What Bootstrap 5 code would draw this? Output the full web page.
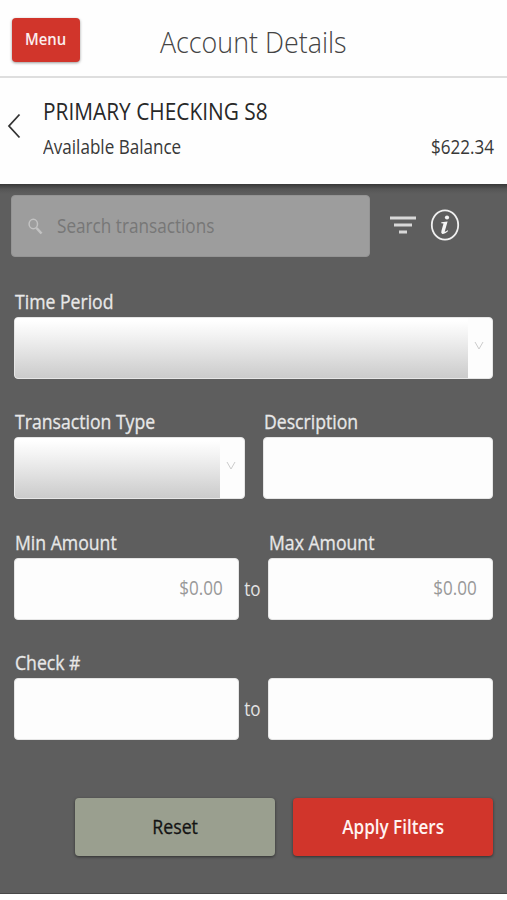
<!DOCTYPE html>
<html lang="en">
<head>
<meta charset="utf-8">
<meta name="viewport" content="width=device-width, initial-scale=1">
<title>Account Details</title>
<link href="https://cdn.jsdelivr.net/npm/bootstrap@5.3.0/dist/css/bootstrap.min.css" rel="stylesheet">
<style>
body{font-family:"Open Sans","Noto Sans",sans-serif;font-size:19.5px;line-height:24px;color:#383838;background:#fefefe;height:900px;overflow:hidden}
.narrow{display:inline-block;white-space:nowrap;transform:scaleX(.875);transform-origin:left center}
.from-right{transform-origin:right center}
.from-mid{transform-origin:center}
.topbar{height:78px;border-bottom:2px solid #dedede;padding:18px 12px 0}
.menu-btn{width:68px;height:44px;padding:0 0 2px;border:0;border-radius:4px;background:#d1352b;color:#fbeeee;font-size:17px;font-weight:600;line-height:40px;box-shadow:0 1px 3px rgba(0,0,0,.4)}
.menu-btn:hover,.act:hover{background:#b92d25;color:#fff}
.page-title{font-size:30px;font-weight:300;line-height:40px;color:#444;margin:4px 68px 0 0}
.page-title .narrow{transform:scaleX(.895)}
.account{height:106px;padding:17px 13px 0 7px}
.back{width:15px;height:26px;margin:18px 21px 0 0}
.acct-name{font-size:23.4px;line-height:32px;color:#282828;margin:0}
.acct-name .narrow{transform:scaleX(.892)}
.bal{margin-top:8px}
.filters{height:710px;background:#5e5e5e linear-gradient(#383838,#555 5px,#5e5e5e 10px) no-repeat 0 0/100% 10px;padding:11px 14px 0;border-bottom:1px solid #484848}
.search{width:359px;height:62px;margin-left:-3px;padding-left:16px;border-radius:4px;background:#9d9d9d;border:1px solid #949494;color:#777}
.search .narrow{margin-left:13.5px;transform:scaleX(.88)}
.funnel{margin:0 0 2px 20px}
.info-i{margin:0 0 3px 14px}
.fields{padding-top:33px}
.group{margin-bottom:31.4px}
.lbl{display:block;color:#e8e8e8;-webkit-text-stroke:.3px;padding-left:1px;margin-bottom:3px}
.lbl .narrow{transform:scaleX(.904)}
.box{height:62px;padding:0 15px 2px;border:1px solid #e6e6e6;border-radius:4px;background:#fdfdfd;color:#999}
.picker{padding:0;overflow:hidden}
.shade{background:linear-gradient(#fff 5%,#f2f2f2 30%,#cbcbcb)}
.drop{width:24px;padding:0 2px 4px 0}
.to-word{width:29px;height:62px;padding-right:2px;color:#e4e4e4}
.half{width:230.5px}
.ranged{width:225px}
.act{width:200px;height:58px;padding:0 0 1px;border:0;border-radius:4px;font-size:19.5px;font-weight:600;box-shadow:0 1px 3px rgba(0,0,0,.5)}
.reset{background:#9a9f8f;color:#141414;font-weight:400;-webkit-text-stroke:.3px}
.reset .narrow{transform:scaleX(.91)}
.apply{background:#d1352b;color:#fff3f2}
.actions{margin-top:58px;gap:18px}
</style>
</head>
<body>
<header class="topbar d-flex align-items-start">
  <button class="btn menu-btn"><span class="narrow from-mid">Menu</span></button>
  <h1 class="page-title flex-grow-1 text-center"><span class="narrow from-mid">Account Details</span></h1>
</header>
<section class="account d-flex align-items-start">
  <svg class="back flex-shrink-0" viewBox="0 0 15 26" fill="none" stroke="#333" stroke-width="1.8"><path d="M12.500 1.500 2 13l10.500 11.500"/></svg>
  <div class="flex-grow-1">
    <h2 class="acct-name fw-normal"><span class="narrow">PRIMARY CHECKING S8</span></h2>
    <div class="bal d-flex justify-content-between"><span class="narrow">Available Balance</span><span class="narrow from-right">$622.34</span></div>
  </div>
</section>
<main class="filters">
  <div class="d-flex align-items-center">
    <div class="search d-flex align-items-center">
      <svg width="15" height="17" viewBox="0 0 15 17" fill="none" stroke="#c2c2c2"><ellipse cx="5.300" cy="6" rx="4.200" ry="4.700" stroke-width="1.500"/><path d="m8.500 10 5 5.500" stroke-width="2.600"/></svg>
      <span class="narrow">Search transactions</span>
    </div>
    <svg class="funnel" width="26" height="18" viewBox="0 0 26 18" stroke="#d8d8d8" stroke-width="3"><path d="M0 2h26M4 9h18M9 16h8"/></svg>
    <svg class="info-i" width="30" height="32" viewBox="0 0 30 32"><ellipse cx="15" cy="16" rx="13.200" ry="14.700" fill="none" stroke="#f0f0f0" stroke-width="1.800"/><circle cx="17" cy="8.500" r="2.100" fill="#f4f4f4"/><path d="M11.300 13.200 17.600 12.400 14.800 22.200Q14.500 23.700 17.800 21.300L18.200 22Q14.800 25.500 12.400 25Q10.700 24.500 11.400 22L13.500 14.600 11.300 14.200Z" fill="#f4f4f4"/></svg>
  </div>
  <form class="fields">
    <div class="group">
      <label class="lbl"><span class="narrow">Time Period</span></label>
      <div class="box picker d-flex"><div class="shade flex-grow-1"></div><div class="drop d-flex align-items-center justify-content-center"><svg width="10" height="10" viewBox="0 0 10 10" fill="none" stroke="#ccc"><path d="m1 1 4 7 4-7"/></svg></div></div>
    </div>
    <div class="group d-flex justify-content-between">
      <div class="half">
        <label class="lbl"><span class="narrow">Transaction Type</span></label>
        <div class="box picker d-flex"><div class="shade flex-grow-1"></div><div class="drop d-flex align-items-center justify-content-center"><svg width="10" height="10" viewBox="0 0 10 10" fill="none" stroke="#ccc"><path d="m1 1 4 7 4-7"/></svg></div></div>
      </div>
      <div class="half">
        <label class="lbl"><span class="narrow">Description</span></label>
        <div class="box"></div>
      </div>
    </div>
    <div class="group d-flex align-items-end">
      <div class="ranged">
        <label class="lbl"><span class="narrow">Min Amount</span></label>
        <div class="box d-flex align-items-center justify-content-end"><span class="narrow from-right">$0.00</span></div>
      </div>
      <div class="to-word d-flex align-items-center justify-content-center"><span class="narrow from-mid">to</span></div>
      <div class="ranged">
        <label class="lbl"><span class="narrow">Max Amount</span></label>
        <div class="box d-flex align-items-center justify-content-end"><span class="narrow from-right">$0.00</span></div>
      </div>
    </div>
    <div class="d-flex align-items-end">
      <div class="ranged">
        <label class="lbl"><span class="narrow">Check #</span></label>
        <div class="box"></div>
      </div>
      <div class="to-word d-flex align-items-center justify-content-center"><span class="narrow from-mid">to</span></div>
      <div class="ranged box"></div>
    </div>
    <div class="actions d-flex justify-content-end">
      <button type="button" class="btn act reset"><span class="narrow from-mid">Reset</span></button>
      <button type="button" class="btn act apply"><span class="narrow from-mid">Apply Filters</span></button>
    </div>
  </form>
</main>
<script src="https://cdn.jsdelivr.net/npm/bootstrap@5.3.0/dist/js/bootstrap.bundle.min.js"></script>
</body>
</html>
